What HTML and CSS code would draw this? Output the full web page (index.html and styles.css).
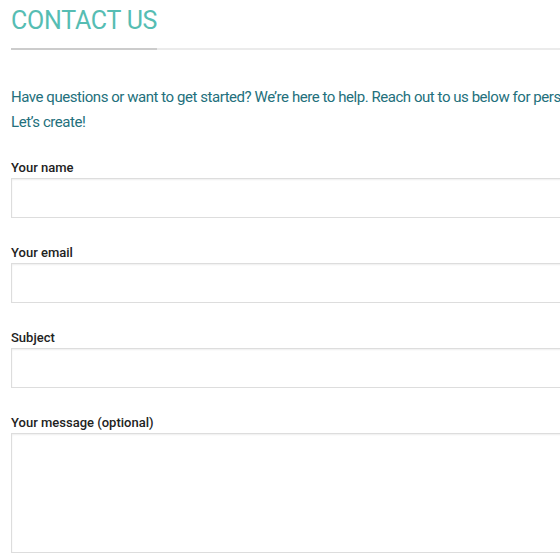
FILE: index.html
```html
<!DOCTYPE html>
<html lang="en">
<head>
    <meta charset="UTF-8">
    <meta name="viewport" content="width=device-width, initial-scale=1.0">
    <title>Contact Us</title>
    <link rel="stylesheet" href="styles.css">
</head>
<body>
    <section class="contact">
        <div class="title-wrap">
            <h1 class="title">CONTACT US</h1>
        </div>

        <p class="intro">
            Have questions or want to get started? We’re here to help. Reach out to us below for personalized support.<br>
            Let’s create!
        </p>

        <form class="contact-form">
            <div class="form-group">
                <label for="your-name">Your name</label>
                <input type="text" id="your-name">
            </div>

            <div class="form-group">
                <label for="your-email">Your email</label>
                <input type="email" id="your-email">
            </div>

            <div class="form-group">
                <label for="your-subject">Subject</label>
                <input type="text" id="your-subject">
            </div>

            <div class="form-group">
                <label for="your-message">Your message (optional)</label>
                <textarea id="your-message"></textarea>
            </div>
        </form>
    </section>
</body>
</html>
```

FILE: styles.css
```css
body {
    font-family: Roboto, "Liberation Sans", sans-serif;
    background-color: #ffffff;
    color: #222222;
    margin: 0;
    padding: 0;
    overflow: hidden;
}

.contact {
    width: 820px;
    padding: 0 0 0 11px;
}

.title-wrap {
    border-bottom: 2px solid #ebebeb;
}

.title {
    display: inline-block;
    margin: 0 0 -2px;
    padding: 6px 0 12px;
    font-size: 25px;
    font-weight: 400;
    line-height: 30px;
    letter-spacing: -0.25px;
    color: #56bdb3;
    border-bottom: 2px solid #cccccc;
}

.intro {
    margin: 35px 0 25px;
    font-size: 15px;
    line-height: 25px;
    letter-spacing: -0.45px;
    color: #23707c;
}

.form-group {
    margin-bottom: 27px;
}

label {
    display: block;
    font-size: 13px;
    font-weight: 500;
    line-height: 16px;
    margin-bottom: 2px;
    color: #222222;
}

input, textarea {
    display: block;
    box-sizing: border-box;
    width: 100%;
    height: 40px;
    margin: 0;
    padding: 8px 10px;
    border: 1px solid #dddddd;
    border-radius: 0;
    box-shadow: inset 0 1px 2px rgba(0, 0, 0, 0.07);
    background: #ffffff;
    font-family: inherit;
    font-size: 14px;
}

textarea {
    height: 120px;
    resize: none;
}
```
